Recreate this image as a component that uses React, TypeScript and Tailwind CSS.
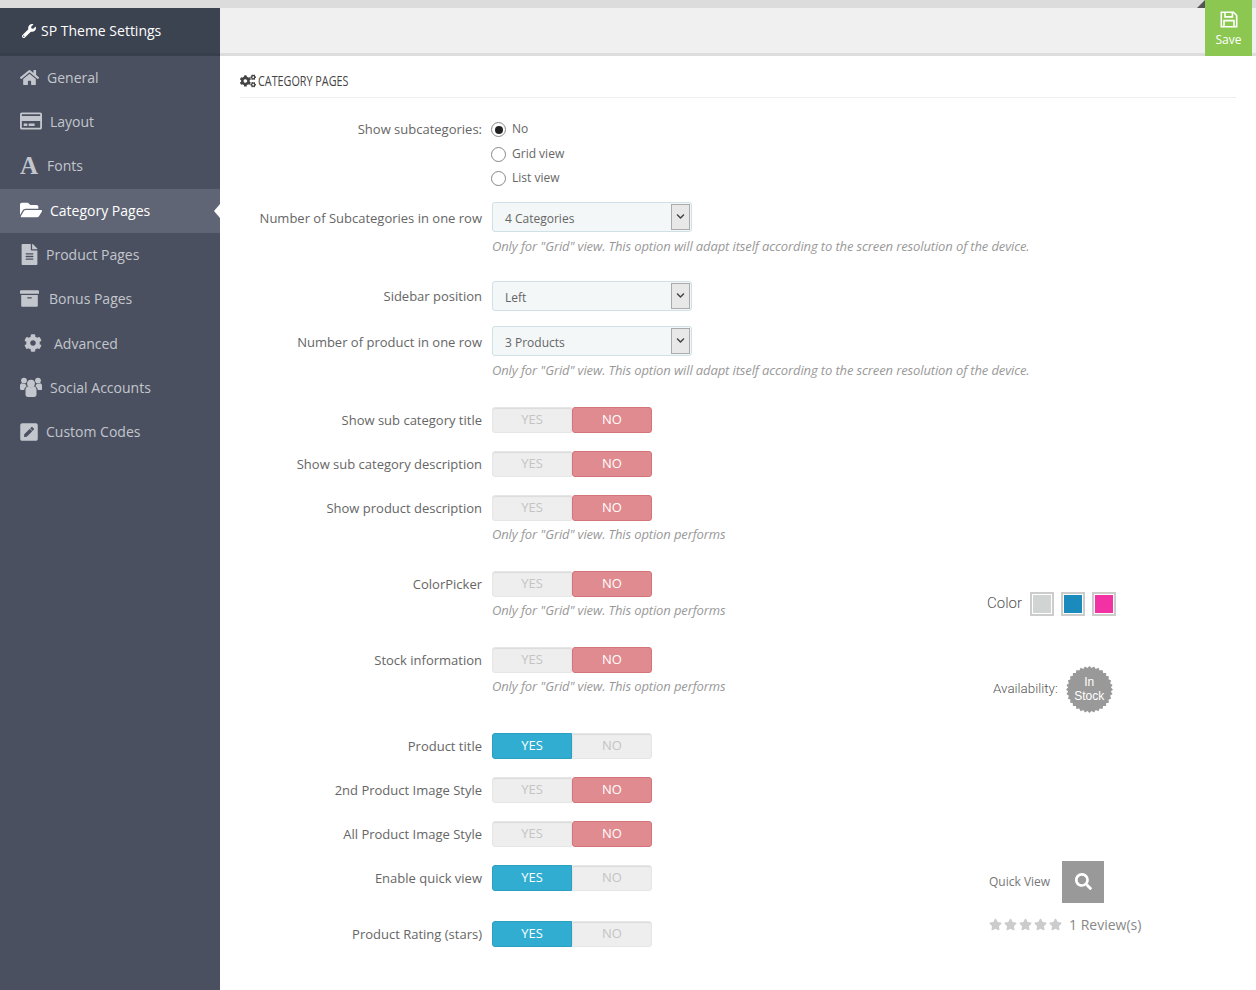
import React from 'react';
import {
  FaWrench, FaHome, FaRegCreditCard, FaFolderOpen, FaFileAlt, FaArchive, FaCog, FaPenSquare, FaCogs, FaSearch, FaStar, FaChevronDown,
} from 'react-icons/fa';

const SaveIcon = () => (
  <svg viewBox="0 0 18 17" className="h-[17px] w-[18px]" fill="none" stroke="currentColor" strokeWidth="1.6">
    <path d="M1.3 1.3h12.2l3.2 3.2v11.2H1.3z" />
    <path d="M5 1.3v4.6h7.4V1.3" />
    <path d="M4 15.7V9.6h10v6.100" />
  </svg>
);

const UsersIcon = () => (
  <svg viewBox="0 0 22 20" className="h-[20px] w-[22px]" fill="currentColor">
    <circle cx="11" cy="6.600" r="3.900" />
    <circle cx="4" cy="3.600" r="2.900" />
    <circle cx="18" cy="3.600" r="2.900" />
    <path d="M5.500 13c0-2.300 1.500-3.400 3-3.400 1.500 1 3.500 1 5 0 1.500 0 3 1.100 3 3.400v4.500c0 1.500-1 2.500-2.500 2.500H8c-1.500 0-2.500-1-2.500-2.500z" />
    <path d="M0 9c0-1.800.8-2.700 2-2.700 1 .8 2.400.8 3.400.4.200 1.200.8 2 1.500 2.600-1.500.6-2.500 2-2.700 3.700H1.500C.6 13 0 12.400 0 11.500z" />
    <path d="M22 9c0-1.800-.8-2.700-2-2.700-1 .8-2.400.8-3.400.4-.2 1.200-.8 2-1.500 2.600 1.500.6 2.500 2 2.700 3.700h3.200c.9 0 1.500-.6 1.500-1.500z" />
  </svg>
);

const menu = [
  { label: 'General', icon: <FaHome size={19} />, gap: 'gap-[8px]' },
  { label: 'Layout', icon: <FaRegCreditCard size={22} />, gap: 'gap-[8px]' },
  { label: 'Fonts', icon: <span className="font-['Liberation_Serif'] font-bold text-[25px] leading-none">A</span>, gap: 'gap-[9px]' },
  { label: 'Category Pages', icon: <FaFolderOpen size={22} />, gap: 'gap-[8px]', active: true },
  { label: 'Product Pages', icon: <FaFileAlt size={21} className="-ml-[1px]" />, gap: 'gap-[6px]' },
  { label: 'Bonus Pages', icon: <FaArchive size={19} />, gap: 'gap-[10px]' },
  { label: 'Advanced', icon: <FaCog size={18} />, gap: 'gap-[12px]', indent: 'pl-[24px]' },
  { label: 'Social Accounts', icon: <UsersIcon />, gap: 'gap-[8px]' },
  { label: 'Custom Codes', icon: <FaPenSquare size={20} className="-ml-[1px]" />, gap: 'gap-[7px]' },
];

const HINT_LONG = 'Only for "Grid" view. This option will adapt itself according to the screen resolution of the device.';
const HINT_SHORT = 'Only for "Grid" view. This option performs';

const Hint = ({ text, tight }: { text: string; tight?: boolean }) => (
  <p className={`${tight ? 'mt-[4px]' : 'mt-[5px]'} whitespace-nowrap text-[13px] leading-[18px] italic text-[#999] tracking-[-0.12px]`}>{text}</p>
);

const offPart = 'bg-[#eeeeee] border border-[#e6e6e6] text-[#c4c4c4] shadow-[inset_0_1px_1px_rgba(0,0,0,0.08)]';

const Toggle = ({ on }: { on: boolean }) => (
  <div className="flex h-[26px] w-[160px] text-[13px] leading-[23px] text-center">
    <div className={on ? 'w-[80px] rounded-l-[3px] border border-[#2a9fc0] bg-[#30add0] text-white' : `w-[80px] rounded-l-[3px] ${offPart}`}>YES</div>
    <div className={on ? `w-[80px] rounded-r-[3px] ${offPart}` : 'w-[80px] rounded-[3px] border border-[#d27479] bg-[#e08b90] text-white'}>NO</div>
  </div>
);

const SelectBox = ({ value }: { value: string }) => (
  <div className="flex h-[30px] w-[200px] items-center rounded-[3px] border border-[#cfe0e6] bg-[#f3f7f8] pl-[12px] pr-[1px] text-[12px] text-[#666]">
    <span className="flex-1 pt-[4px]">{value}</span>
    <span className="flex h-[26px] w-[19px] items-center justify-center border border-[#aaa] bg-[#e8e8e8] text-[#444]">
      <FaChevronDown size={9} />
    </span>
  </div>
);

const Radio = ({ label, checked }: { label: string; checked?: boolean }) => (
  <div className="flex h-[24.5px] items-center gap-[6px] text-[12px] text-[#666]">
    <span className="-ml-[1px] flex h-[15px] w-[15px] items-center justify-center rounded-full border-[1.5px] border-[#888] bg-white">
      {checked && <span className="h-[8px] w-[8px] rounded-full bg-[#222]" />}
    </span>
    <span className="-mt-[1px]">{label}</span>
  </div>
);

const Row = ({ label, top, labelTop, children, side }: { label: string; top: string; labelTop?: string; children: React.ReactNode; side?: React.ReactNode }) => (
  <div className={`grid grid-cols-[242px_505px_1fr] ${top}`}>
    <div className={`text-right text-[13px] leading-[26px] text-[#666] ${labelTop ?? ''}`}>{label}</div>
    <div className="pl-[10px]">{children}</div>
    <div>{side}</div>
  </div>
);

const Swatch = ({ color }: { color: string }) => (
  <span className="h-[24px] w-[24px] border-2 border-[#ccc] p-[1px] bg-white">
    <span className={`block h-full w-full ${color}`} />
  </span>
);

// seal shape behind the stock label
const sealPoints = Array.from({ length: 64 }, (_, i) => {
  const r = i % 2 === 0 ? 23.5 : 21.5;
  const a = (i / 64) * Math.PI * 2;
  return `${(23.5 + r * Math.cos(a)).toFixed(2)},${(23.5 + r * Math.sin(a)).toFixed(2)}`;
}).join(' ');

export default function App() {
  return (
    <div className="flex h-[990px] flex-col overflow-hidden bg-white font-['Open_Sans',sans-serif]">
      <div className="relative h-[8px] shrink-0 bg-[#dcdcdc]">
        <div className="absolute right-[51px] top-0 h-0 w-0 border-b-[8px] border-l-[8px] border-b-[#555] border-l-transparent" />
      </div>
      <div className="flex flex-1">
        <aside className="w-[220px] shrink-0 bg-[#4a5060]">
          <div className="flex h-[48px] items-center gap-[5px] bg-[#3b4250] border-b-[3px] border-[#383f4c] pl-[22px] text-[14px] text-white">
            <FaWrench size={14} />
            <span>SP Theme Settings</span>
          </div>
          {menu.map((m) => (
            <div
              key={m.label}
              className={`relative flex h-[44.33px] items-center pb-[2px] ${m.gap} ${m.indent ?? 'pl-[20px]'} text-[14px] ${m.active ? 'bg-[#5f6574] text-white' : 'text-[#c3c6cc]'}`}
            >
              {m.icon}
              <span>{m.label}</span>
              {m.active && (
                <span className="absolute right-0 top-1/2 h-0 w-0 -translate-y-1/2 border-y-[7px] border-r-[6px] border-y-transparent border-r-white" />
              )}
            </div>
          ))}
        </aside>

        <main className="min-w-0 flex-1">
          <div className="relative h-[48px] border-b-[3px] border-[#dddddd] bg-[#f0f0f0]">
            <div className="absolute right-[4px] -top-[8px] flex h-[56px] w-[47px] flex-col items-center bg-[#8cc751] pt-[11px] text-[12px] text-white">
              <SaveIcon />
              <span className="mt-[3px]">Save</span>
            </div>
          </div>

          <div className="px-[20px]">
            <div className="mt-[16px] flex h-[26px] w-[996px] items-center gap-[2px] border-b border-[#eeeeee] pb-[8px] text-[#444]">
              <FaCogs size={16} />
              <span className="origin-left scale-x-[0.72] text-[15px] whitespace-nowrap">CATEGORY PAGES</span>
            </div>

            <Row label="Show subcategories:" top="mt-[18px]">
              <div className="pt-[1.5px]">
                <Radio label="No" checked />
                <Radio label="Grid view" />
                <Radio label="List view" />
              </div>
            </Row>
            <Row label="Number of Subcategories in one row" top="mt-[10.5px]" labelTop="mt-[3px]">
              <SelectBox value="4 Categories" />
              <Hint text={HINT_LONG} />
            </Row>
            <Row label="Sidebar position" top="mt-[26px]" labelTop="mt-[2px]">
              <SelectBox value="Left" />
            </Row>
            <Row label="Number of product in one row" top="mt-[15px]" labelTop="mt-[3px]">
              <SelectBox value="3 Products" />
              <Hint text={HINT_LONG} />
            </Row>
            <Row label="Show sub category title" top="mt-[28px]"><Toggle on={false} /></Row>
            <Row label="Show sub category description" top="mt-[18px]"><Toggle on={false} /></Row>
            <Row label="Show product description" top="mt-[18px]">
              <Toggle on={false} />
              <Hint text={HINT_SHORT} tight />
            </Row>
            <Row
              label="ColorPicker"
              top="mt-[28px]"
              side={
                <div className="mt-[21px] flex items-center gap-[7px] font-['Roboto'] font-light text-[15px] text-[#555]">
                  <span className="mr-[1px] w-[35px]">Color</span>
                  <Swatch color="bg-[#d0d4d3]" />
                  <Swatch color="bg-[#1b8abd]" />
                  <Swatch color="bg-[#f232a4]" />
                </div>
              }
            >
              <Toggle on={false} />
              <Hint text={HINT_SHORT} tight />
            </Row>
            <Row
              label="Stock information"
              top="mt-[28px]"
              side={
                <div className="mt-[19px] flex items-center gap-[8px] pl-[6px] font-['Roboto'] font-light text-[13.400px] text-[#555]">
                  <span>Availability:</span>
                  <span className="relative flex h-[47px] w-[47px] items-center justify-center text-center font-['Liberation_Sans'] font-normal text-[12px] leading-[14px] text-white">
                    <svg viewBox="0 0 47 47" className="absolute inset-0 h-full w-full">
                      <polygon points={sealPoints} fill="#999999" />
                    </svg>
                    <span className="relative">In<br />Stock</span>
                  </span>
                </div>
              }
            >
              <Toggle on={false} />
              <Hint text={HINT_SHORT} tight />
            </Row>
            <Row label="Product title" top="mt-[20px]"><Toggle on /></Row>
            <Row label="2nd Product Image Style" top="mt-[18px]"><Toggle on={false} /></Row>
            <Row label="All Product Image Style" top="mt-[18px]"><Toggle on={false} /></Row>
            <Row
              label="Enable quick view"
              top="mt-[18px]"
              side={
                <div className="-mb-[12px] -mt-[4px] flex h-[42px] items-center pl-[2px] text-[12px] text-[#777]">
                  <span className="w-[73px]">Quick View</span>
                  <span className="flex h-[42px] w-[42px] items-center justify-center bg-[#999] text-white">
                    <FaSearch size={17} />
                  </span>
                </div>
              }
            >
              <Toggle on />
            </Row>
            <Row
              label="Product Rating (stars)"
              top="mt-[30px]"
              side={
                <div className="-mt-[9px] flex h-[26px] items-center pl-[2px] text-[14px] text-[#888]">
                  <span className="flex w-[80px] gap-[2px] text-[#cccccc]">
                    {[0, 1, 2, 3, 4].map((i) => <FaStar key={i} size={13} />)}
                  </span>
                  <span>1 Review(s)</span>
                </div>
              }
            >
              <Toggle on />
            </Row>
          </div>
        </main>
      </div>
    </div>
  );
}
